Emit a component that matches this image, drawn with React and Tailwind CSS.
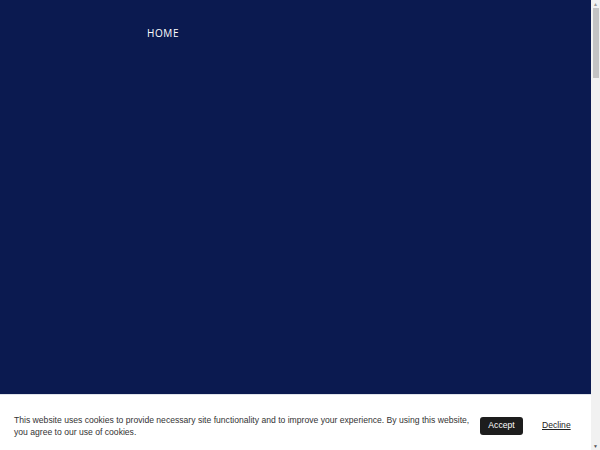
import React from 'react';

const App = () => {
  return (
    <div className="relative h-screen w-full flex" style={{ fontFamily: '"Liberation Sans", Arial, sans-serif' }}>
      <div className="flex-1 h-full overflow-y-scroll [scrollbar-width:none]">
        {/* Hero */}
        <header className="bg-[#0b1a50] h-[900px]">
          <nav className="pl-[147px] pt-[20px]">
            <a className="text-white text-[10px] tracking-[0.6px] font-['Open_Sans',sans-serif]" href="#">HOME</a>
          </nav>
        </header>
        <section className="bg-white h-[1900px]"></section>
      </div>

      {/* Scrollbar */}
      <div className="w-[9px] h-full bg-[#f1f1f1] flex flex-col items-center">
        <span className="text-[#9a9a9a] text-[5px] leading-[8px] h-[8px]">▲</span>
        <div className="w-[6px] h-[70px] bg-[#c3c3c3]"></div>
        <div className="flex-1"></div>
        <span className="text-[#555] text-[5px] leading-[8px] h-[8px]">▼</span>
      </div>

      {/* Cookie banner */}
      <div className="absolute bottom-0 left-0 right-[9px] h-[56px] bg-white border-t border-[#dfe3ea] flex items-center pl-[14px]">
        <p className="text-[#333] text-[8.6px] leading-[12px] w-[466px] mt-[6px]">
          This website uses cookies to provide necessary site functionality and to improve your experience. By using this website, you agree to our use of cookies.
        </p>
        <button className="mt-[6px] bg-[#1d1d1d] text-white text-[8.6px] rounded-[3px] w-[43px] h-[18px]">Accept</button>
        <button className="ml-[19px] mt-[6px] text-[#222] text-[8.6px] underline">Decline</button>
      </div>
    </div>
  );
};

export default App;
